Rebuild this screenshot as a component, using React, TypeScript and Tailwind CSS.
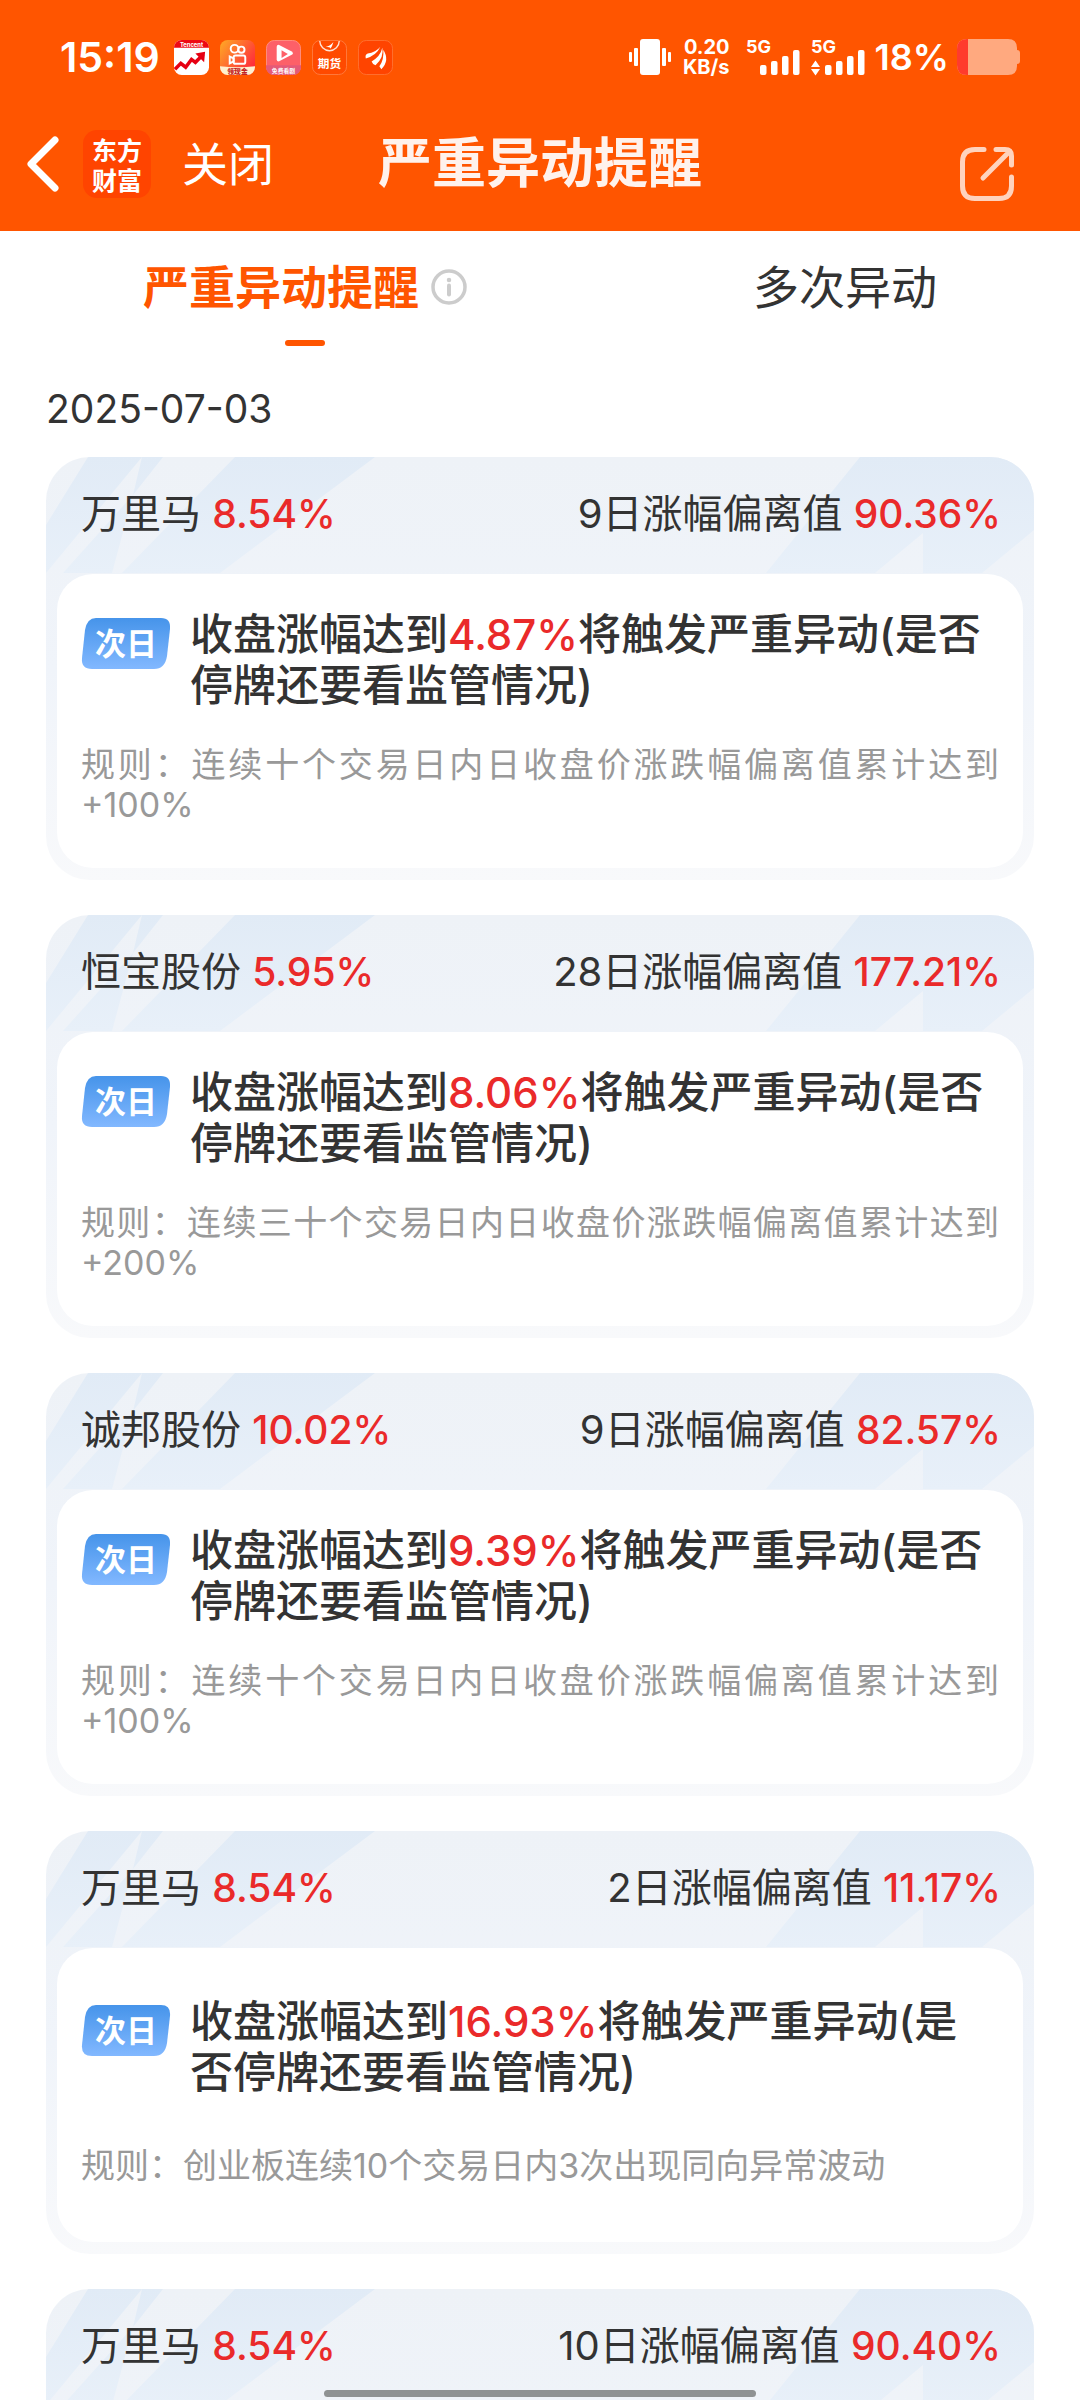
import React from "react";

type Alert = {
  name: string;
  change: string;
  days: number;
  deviation: string;
  trigger?: string;
  rule?: string;
};

const alerts: Alert[] = [
  { name: "万里马", change: "8.54%", days: 9, deviation: "90.36%", trigger: "4.87%", rule: "连续十个交易日内日收盘价涨跌幅偏离值累计达到+100%" },
  { name: "恒宝股份", change: "5.95%", days: 28, deviation: "177.21%", trigger: "8.06%", rule: "连续三十个交易日内日收盘价涨跌幅偏离值累计达到+200%" },
  { name: "诚邦股份", change: "10.02%", days: 9, deviation: "82.57%", trigger: "9.39%", rule: "连续十个交易日内日收盘价涨跌幅偏离值累计达到+100%" },
  { name: "万里马", change: "8.54%", days: 2, deviation: "11.17%", trigger: "16.93%", rule: "创业板连续10个交易日内3次出现同向异常波动" },
  { name: "万里马", change: "8.54%", days: 10, deviation: "90.40%" },
];

function AppIcons() {
  return (
    <div className="flex gap-[11px]">
      <svg className="size-[35px]" viewBox="0 0 36 36">
        <rect width="36" height="36" rx="8" fill="#fff" />
        <path d="M0 8a8 8 0 0 1 8-8h20a8 8 0 0 1 8 8z" fill="#ee0a14" />
        <text x="18" y="7" fontSize="6" fill="#fff" textAnchor="middle" fontWeight="700">Tencent</text>
        <path d="M1 30l6-6 5 4 6-8 4 3 8-8" fill="none" stroke="#e60012" strokeWidth="3.6" />
        <path d="M22 14l10-2-1 11z" fill="#e60012" />
      </svg>
      <svg className="size-[35px]" viewBox="0 0 36 36">
        <defs>
          <linearGradient id="ks" x1="0" y1="0" x2="1" y2="0.7">
            <stop offset="0" stopColor="#ffab24" />
            <stop offset="1" stopColor="#ff2a3c" />
          </linearGradient>
        </defs>
        <rect width="36" height="36" rx="8" fill="url(#ks)" />
        <path d="M0 27q18 2 36 0v1a8 8 0 0 1-8 8H8a8 8 0 0 1-8-8z" fill="#fff0cf" />
        <g fill="none" stroke="#fff" strokeWidth="2">
          <circle cx="15" cy="9" r="4" />
          <circle cx="22" cy="10" r="3.2" />
          <rect x="14" y="16" width="12" height="8.5" rx="2" />
          <path d="M14 19l-4-2v7l4-2z" />
        </g>
        <text x="18" y="34.500" fontSize="7" fill="#c32323" textAnchor="middle" fontWeight="900">领现金</text>
      </svg>
      <svg className="size-[35px]" viewBox="0 0 36 36">
        <rect x="0.500" y="0.500" width="35" height="35" rx="8" fill="#fd6068" stroke="#ff8d80" />
        <path d="M0 26h36v2a8 8 0 0 1-8 8H8a8 8 0 0 1-8-8z" fill="#e45a78" />
        <path d="M13 5q-2 0-2 2v13q0 2 2 2l14-7q1.500-1 0-3z" fill="#fff" />
        <path d="M16 10.500v8l6.500-4z" fill="#fd6068" />
        <text x="18" y="33.500" fontSize="6" fill="#fff" textAnchor="middle" fontWeight="700">免费看剧</text>
      </svg>
      <svg className="size-[35px]" viewBox="0 0 36 36">
        <rect x="0.500" y="0.500" width="35" height="35" rx="8" fill="#ff4a00" stroke="#ff7a3d" />
        <path d="M8 1a10 10 0 0 0 20 0" fill="none" stroke="#ffe3d6" strokeWidth="1.400" />
        <path d="M14 7q5-1 8-5-1 4-3 7 0-2-5-2z" fill="#fff" />
        <text x="18" y="29" fontSize="12" fill="#fff" textAnchor="middle" fontWeight="700">期货</text>
      </svg>
      <svg className="size-[35px]" viewBox="0 0 36 36">
        <rect x="0.500" y="0.500" width="35" height="35" rx="8" fill="#ff4400" stroke="#ff7030" />
        <path d="M8 19q-1-4 2-5 8-1 13-7-4 9-15 12z" fill="#fff" />
        <path d="M14 22q9-5 11-14 2 10-7 18-3-1-4-4z" fill="#fff" />
        <path d="M22 27q5-7 4-17 7 11-2 20z" fill="#fff" />
      </svg>
    </div>
  );
}

function Signal({ arrows = false }: { arrows?: boolean }) {
  return (
    <svg className="h-[36px] w-[54px] overflow-visible" viewBox="0 0 54 36" fill="#fff">
      <text x="0" y="14" fontSize="18" fontWeight="700">5G</text>
      {arrows && <path d="M0 28l4.500-6.500L9 28zM0 30l4.500 6.500L9 30z" />}
      <rect x="14" y="26" width="6.500" height="10" rx="2" />
      <rect x="25" y="22" width="6.500" height="14" rx="2" />
      <rect x="36" y="17" width="6.500" height="19" rx="2" />
      <rect x="47" y="11" width="6.500" height="25" rx="2" />
    </svg>
  );
}

function StatusBar() {
  return (
    <div className="flex h-[36px] items-center justify-between px-[60px] text-white">
      <div className="flex items-center gap-[14px]">
        <span className="text-[41px] leading-none font-semibold">15:19</span>
        <AppIcons />
      </div>
      <div className="flex items-center">
        <svg className="h-[36px] w-[42px]" viewBox="0 0 42 36" fill="#fff">
          <rect x="11" width="20" height="36" rx="3" />
          <rect x="5" y="9" width="4" height="18" rx="1" />
          <rect x="33" y="9" width="4" height="18" rx="1" />
          <rect y="13" width="3" height="10" rx="1" />
          <rect x="39" y="13" width="3" height="10" rx="1" />
        </svg>
        <div className="ml-3 text-right text-[20px] leading-[20px] font-bold">
          <div>0.20</div>
          <div>KB/s</div>
        </div>
        <div className="ml-4 flex gap-[11px]">
          <Signal />
          <Signal arrows />
        </div>
        <span className="ml-[10px] text-[36px] leading-none font-semibold">18%</span>
        <svg className="ml-2 h-[36px] w-[63px]" viewBox="0 0 63 36">
          <path d="M10 0h41q9 0 9 9v2q3 0 3 3v8q0 3-3 3v2q0 9-9 9H10Q0 36 0 26V10Q0 0 10 0z" fill="#ffa97f" />
          <path d="M11 0H10Q0 0 0 10v16q0 10 10 10h1z" fill="#ff3b2d" />
        </svg>
      </div>
    </div>
  );
}

function NavBar() {
  return (
    <div className="grid grid-cols-[1fr_auto_1fr] items-center px-[25px]">
      <div className="flex items-center">
        <button type="button" aria-label="返回">
          <svg className="h-[56px] w-[36px]" viewBox="0 0 36 56" fill="none" stroke="#fff" strokeWidth="7" strokeLinecap="round" strokeLinejoin="round">
            <path d="M30 4L6 28l24 24" />
          </svg>
        </button>
        <div className="ml-[22px] flex size-[68px] flex-col items-center justify-center rounded-[14px] bg-[#ff4400] font-['Noto_Sans_CJK_SC'] text-[25px] leading-[30px] font-bold text-white">
          <span>东方</span>
          <span>财富</span>
        </div>
        <button type="button" className="ml-[31px] text-[46px] leading-[60px] text-white">关闭</button>
      </div>
      <h1 className="text-[54px] leading-[64px] font-bold text-[#fff2ec]">严重异动提醒</h1>
      <button type="button" aria-label="分享" className="mr-10 justify-self-end pt-5">
        <svg className="size-[56px]" viewBox="0 0 56 56" fill="none" stroke="#ffd3bd" strokeWidth="5" strokeLinecap="round" strokeLinejoin="round">
          <path d="M25 3.500H16Q3.500 3.500 3.500 16V40Q3.500 52.500 16 52.500H40Q52.500 52.500 52.500 40V31" />
          <path d="M37 3.500H46Q52.500 3.500 52.500 10V19M49 7L24 32" />
        </svg>
      </button>
    </div>
  );
}

function Stripes() {
  return (
    <svg className="absolute inset-x-0 top-0 h-[180px] w-full" viewBox="0 0 988 180" preserveAspectRatio="none">
      <defs>
        <linearGradient id="stripe" gradientUnits="userSpaceOnUse" x1="0" y1="0" x2="0" y2="180">
          <stop offset="0" stopColor="#e1ebf6" />
          <stop offset="0.650" stopColor="#e8f0f9" />
          <stop offset="1" stopColor="#f0f4fa" />
        </linearGradient>
      </defs>
      <g fill="url(#stripe)">
        <path d="M42 0H96L0 116V68z" />
        <path d="M96 0H117L87 38z" />
        <path d="M87 38L66 116H17z" />
        <path d="M189 0H329L174 116H76z" />
        <path d="M814 0H988V73L936 116H877V76L829 116H720z" />
      </g>
    </svg>
  );
}

function NextDayTag() {
  return (
    <div className="relative mt-[9px] flex h-[51px] w-[90px] shrink-0 items-center justify-center">
      <svg className="absolute inset-0 size-full" viewBox="0 0 90 51" aria-hidden="true">
        <defs>
          <linearGradient id="tag" x1="0" y1="0" x2="0" y2="1">
            <stop offset="0" stopColor="#4694ea" />
            <stop offset="1" stopColor="#82b8ff" />
          </linearGradient>
        </defs>
        <path d="M15 0H80Q90 0 89 11L86 38Q84 51 73 51H11Q0 51 1 40L4 12Q6 0 15 0z" fill="url(#tag)" />
      </svg>
      <span className="relative text-[31px] leading-none font-bold text-white">次日</span>
    </div>
  );
}

function AlertCard({ alert }: { alert: Alert }) {
  return (
    <article className="relative shrink-0 overflow-hidden rounded-[44px] bg-linear-to-b from-[#eef2f7] via-[#f0f4fa] to-[#f8f9fb] px-[11px] pb-3">
      <Stripes />
      <header className="relative flex h-[117px] items-center justify-between pr-[22px] pb-[3px] pl-6 text-[40px] leading-[56px]">
        <h2>
          {alert.name} <span className="text-[39px] font-medium text-[#ea2a2a]">{alert.change}</span>
        </h2>
        <p>
          {alert.days}日涨幅偏离值 <span className="text-[39px] font-medium text-[#ea2a2a]">{alert.deviation}</span>
        </p>
      </header>
      <div className="relative flex min-h-[294px] flex-col justify-evenly rounded-[36px] bg-white px-6 pb-2">
        {alert.trigger && (
          <>
            <div className="flex gap-[19px]">
              <NextDayTag />
              <p className="text-[43px] leading-[51px] font-medium">
                收盘涨幅达到<span className="text-[42px] text-[#ea2a2a]">{alert.trigger}</span>将触发严重异动(是否停牌还要看监管情况)
              </p>
            </div>
            <p className="text-justify text-[34px] leading-[40px] text-[#999]">规则：{alert.rule}</p>
          </>
        )}
      </div>
    </article>
  );
}

export default function App() {
  return (
    <div lang="zh-CN" className="relative flex h-screen flex-col overflow-hidden bg-white font-['Inter','Noto_Sans_CJK_SC',sans-serif] text-[#333]">
      <div className="flex shrink-0 flex-col gap-[51px] bg-[#ff5500] pt-[39px] pb-[29px]">
        <StatusBar />
        <NavBar />
      </div>
      <nav className="flex shrink-0 text-[46px] leading-[60px]">
        <button type="button" className="flex flex-[61] flex-col items-center pt-[26px]">
          <span className="flex items-center gap-3 font-bold text-[#ff5500]">
            严重异动提醒
            <svg className="size-[36px]" viewBox="0 0 36 36" fill="none" stroke="#ccc" strokeWidth="3.500" strokeLinecap="round">
              <circle cx="18" cy="18" r="16" />
              <path d="M18 16.500v9" strokeWidth="4" />
              <path d="M18 11v0.100" strokeWidth="4.500" />
            </svg>
          </span>
          <span className="mt-[23px] h-[6px] w-[40px] rounded-full bg-[#ff5500]" />
        </button>
        <button type="button" className="flex flex-[47] justify-center pt-[26px]">多次异动</button>
      </nav>
      <main className="flex min-h-0 flex-1 flex-col overflow-y-auto px-[46px] [scrollbar-width:none]">
        <time className="mt-[35px] mb-5 text-[39px] leading-[56px]" dateTime="2025-07-03">2025-07-03</time>
        <div className="flex flex-col gap-[35px]">
          {alerts.map((alert, i) => (
            <AlertCard key={i} alert={alert} />
          ))}
        </div>
      </main>
      <div className="absolute bottom-[3px] left-1/2 h-[7px] w-2/5 -translate-x-1/2 rounded-full bg-[#8f9293]" />
    </div>
  );
}
